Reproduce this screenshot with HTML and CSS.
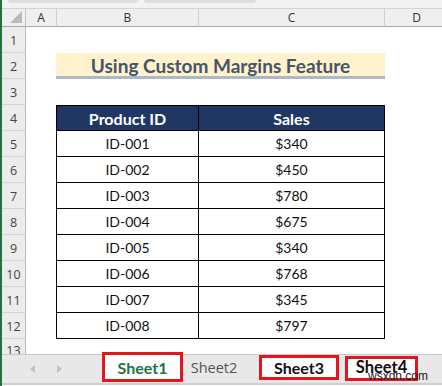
FILE: index.html
```html
<!DOCTYPE html>
<html lang="en">

<head>
    <meta charset="UTF-8">
    <meta name="viewport" content="width=device-width, initial-scale=1.0">
    <title>Custom Margins</title>
    <link rel="stylesheet" href="styles.css">
</head>

<body>
    <div class="app">
        <div class="topbar">
            <div class="namebox"></div>
            <div class="formula"></div>
        </div>

        <div class="sheet">
            <div class="corner"><span class="tri"></span></div>
            <div class="colhead">A</div>
            <div class="colhead">B</div>
            <div class="colhead">C</div>
            <div class="colhead">D</div>

            <div class="rowhead">1</div>
            <div class="blank wide4"></div>

            <div class="rowhead">2</div>
            <div class="blank"></div>
            <div class="title">Using Custom Margins Feature</div>
            <div class="blank"></div>

            <div class="rowhead">3</div>
            <div class="blank wide4"></div>

            <div class="rowhead">4</div>
            <div class="blank"></div>
            <div class="td th first top">Product ID</div>
            <div class="td th top">Sales</div>
            <div class="blank"></div>

            <div class="rowhead">5</div>
            <div class="blank"></div>
            <div class="td first">ID-001</div>
            <div class="td">$340</div>
            <div class="blank"></div>

            <div class="rowhead">6</div>
            <div class="blank"></div>
            <div class="td first">ID-002</div>
            <div class="td">$450</div>
            <div class="blank"></div>

            <div class="rowhead">7</div>
            <div class="blank"></div>
            <div class="td first">ID-003</div>
            <div class="td">$780</div>
            <div class="blank"></div>

            <div class="rowhead">8</div>
            <div class="blank"></div>
            <div class="td first">ID-004</div>
            <div class="td">$675</div>
            <div class="blank"></div>

            <div class="rowhead">9</div>
            <div class="blank"></div>
            <div class="td first">ID-005</div>
            <div class="td">$340</div>
            <div class="blank"></div>

            <div class="rowhead">10</div>
            <div class="blank"></div>
            <div class="td first">ID-006</div>
            <div class="td">$768</div>
            <div class="blank"></div>

            <div class="rowhead">11</div>
            <div class="blank"></div>
            <div class="td first">ID-007</div>
            <div class="td">$345</div>
            <div class="blank"></div>

            <div class="rowhead">12</div>
            <div class="blank"></div>
            <div class="td first">ID-008</div>
            <div class="td">$797</div>
            <div class="blank"></div>

            <div class="rowhead cut">13</div>
            <div class="blank wide4"></div>
        </div>

        <div class="tabs">
            <span class="arrow left"></span>
            <span class="arrow right"></span>
            <div class="tab active">Sheet1</div>
            <div class="tab plain">Sheet2</div>
            <div class="tab marked s3">Sheet3</div>
            <div class="tab marked s4">Sheet4</div>
            <div class="watermark">wsxdn.com</div>
        </div>
    </div>
</body>

</html>
```

FILE: styles.css
```css
* {
    margin: 0;
    padding: 0;
    box-sizing: border-box;
}

body {
    background-color: #fff;
    font-family: Lato, "Liberation Sans", sans-serif;
}

.app {
    position: relative;
    width: 442px;
    height: 386px;
    overflow: hidden;
    border-left: 2px solid #217346;
}

/* strip left over from the formula bar */
.topbar {
    display: flex;
    height: 9px;
    background-color: #f3f3f3;
    border-bottom: 1px solid #d4d4d4;
}

.namebox {
    width: 130px;
    height: 3px;
    margin-left: 6px;
    background-color: #dedede;
    border-radius: 0 0 4px 4px;
}

.formula {
    width: 112px;
    height: 3px;
    margin-left: 6px;
    background-color: #dedede;
    border-radius: 0 0 4px 4px;
}

.sheet {
    display: grid;
    grid-template-columns: 24px 31px 142px 186px 64px;
    grid-template-rows: 18px repeat(12, 26px) 15px;
    width: 447px;
}

.corner {
    position: relative;
    background-color: #efefef;
    border-right: 1px solid #c4c4c4;
    border-bottom: 1px solid #a9a9a9;
}

.tri {
    position: absolute;
    right: 3px;
    bottom: 3px;
    width: 0;
    height: 0;
    border-left: 12px solid transparent;
    border-bottom: 12px solid #b9b9b9;
}

.colhead {
    display: flex;
    align-items: center;
    justify-content: center;
    background-color: #efefef;
    border-right: 1px solid #cfcfcf;
    border-bottom: 1px solid #a9a9a9;
    font-family: "Open Sans", sans-serif;
    font-size: 12px;
    color: #333;
}

.rowhead {
    display: flex;
    align-items: flex-end;
    justify-content: center;
    padding-bottom: 3px;
    background-color: #ececec;
    border-right: 1px solid #bdbdbd;
    border-bottom: 1px solid #d6d6d6;
    font-family: "Open Sans", sans-serif;
    font-size: 12.5px;
    color: #444;
}

.rowhead.cut {
    align-items: flex-start;
    padding-top: 6px;
    border-bottom: none;
    line-height: 12px;
    overflow: hidden;
}

.wide4 {
    grid-column: span 4;
}

.title {
    grid-column: span 2;
    display: flex;
    align-items: center;
    justify-content: center;
    margin-left: -1px;
    padding-top: 2px;
    background-color: #fff2cc;
    border-bottom: 3px solid #acb9ca;
    font-size: 19px;
    font-weight: bold;
    color: #44546a;
}

.td {
    display: flex;
    align-items: center;
    justify-content: center;
    border-right: 1.5px solid #000;
    border-bottom: 1.5px solid #000;
    font-size: 14px;
    color: #111;
}

.td.first {
    border-left: 1.5px solid #000;
    margin-left: -1px;
}

.td.top {
    border-top: 1px solid #000;
}

.td.th {
    background-color: #203764;
    color: #fff;
    font-weight: bold;
    font-size: 16px;
    border-right-width: 1px;
}

/* sheet tabs */
.tabs {
    position: relative;
    display: flex;
    align-items: flex-start;
    height: 31px;
    background-color: #e8e8e8;
    border-top: 1px solid #c9c9c9;
    border-bottom: 2px solid #cfcfcf;
}

.arrow {
    width: 0;
    height: 0;
    margin-top: 10px;
    border-top: 4px solid transparent;
    border-bottom: 4px solid transparent;
}

.arrow.left {
    margin-left: 28px;
    border-right: 5px solid #c2c2c2;
}

.arrow.right {
    margin-left: 22px;
    border-left: 5px solid #c2c2c2;
}

.tab {
    display: flex;
    align-items: center;
    justify-content: center;
    font-size: 16px;
}

.tab.active {
    width: 81px;
    height: 30px;
    margin-top: -3px;
    margin-left: 40px;
    background-color: #fff;
    border: 3px solid #e3161d;
    color: #217346;
    font-weight: bold;
}

.tab.plain {
    width: 62px;
    height: 24px;
    margin-top: 0;
    color: #555;
    font-family: "Open Sans", sans-serif;
    font-size: 14.5px;
}

.tab.marked {
    height: 25px;
    background-color: #fff;
    border: 3px solid #e3161d;
    color: #111;
    font-weight: bold;
}

.tab.s3 {
    width: 80px;
    margin-left: 14px;
    margin-top: 0;
}

.tab.s4 {
    width: 73px;
    margin-left: 6px;
    margin-top: 1px;
    align-items: flex-start;
    line-height: 17px;
    font-size: 16.5px;
}

.watermark {
    position: absolute;
    left: 366px;
    top: 14px;
    font-family: "Liberation Sans", sans-serif;
    font-size: 12px;
    color: #222;
}
```
